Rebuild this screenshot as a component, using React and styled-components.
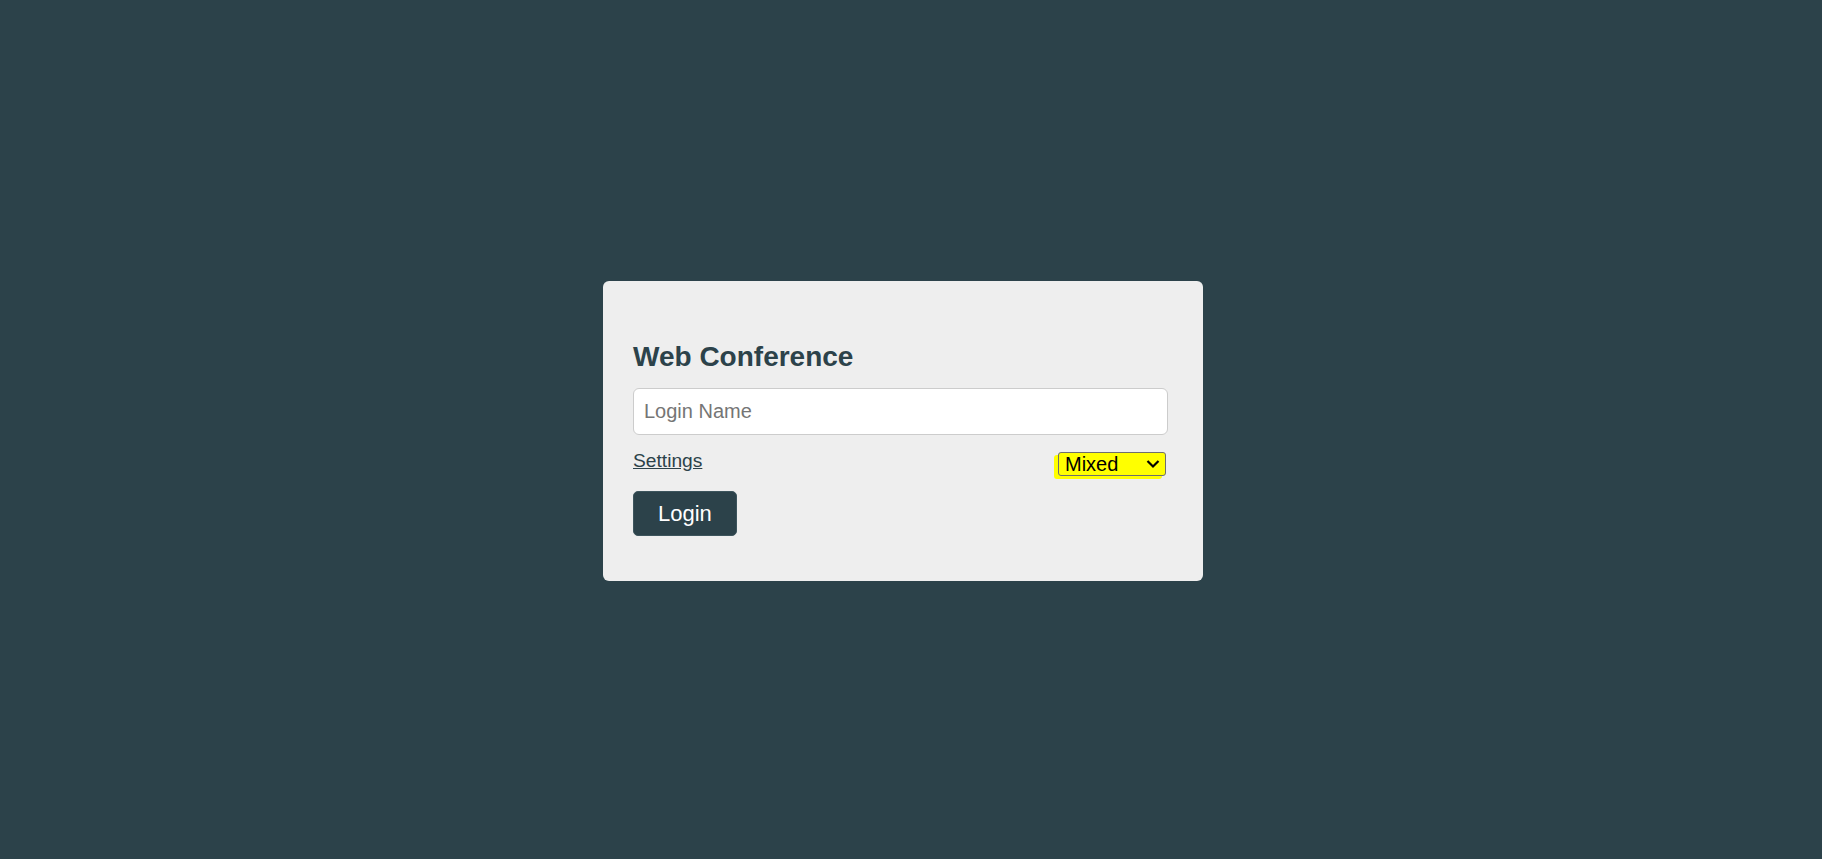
import React from 'react';
import styled, { createGlobalStyle } from 'styled-components';

const GlobalStyle = createGlobalStyle`
    * { box-sizing: border-box; }
    html, body {
        margin: 0;
        padding: 0;
        background-color: #2c424a;
        font-family: "Liberation Sans", Arial, sans-serif;
    }
`;

const Page = styled.div`
    min-height: 100vh;
    display: flex;
    align-items: center;
    justify-content: center;
    padding-right: 16px;
    padding-top: 3px;
`;

const Card = styled.div`
    width: 600px;
    background-color: #eeeeee;
    border-radius: 6px;
    padding: 30px 35px 45px 30px;
    display: flex;
    flex-direction: column;
`;

const Title = styled.h2`
    margin: 30px 0 15px;
    font-size: 28px;
    font-weight: bold;
    line-height: 32px;
    color: #2c424a;
`;

const Input = styled.input`
    width: 100%;
    height: 47px;
    padding: 0 10px;
    font-family: inherit;
    font-size: 20px;
    color: #222;
    background: #fff;
    border: 1px solid #cccccc;
    border-radius: 6px;
    outline: none;
    caret-color: #000;
    &::placeholder {
        color: #757575;
    }
`;

const Row = styled.div`
    margin-top: 15px;
    display: flex;
    justify-content: space-between;
    align-items: flex-start;
`;

const SettingsLink = styled.a`
    font-size: 19.2px;
    line-height: 22px;
    color: #2c424a;
    text-decoration: underline;
    cursor: pointer;
`;

const SelectWrap = styled.div`
    position: relative;
    margin-top: 2px;
    margin-right: 2px;
`;

const Select = styled.select`
    appearance: none;
    width: 108px;
    height: 24px;
    padding: 0 0 0 6px;
    font-family: inherit;
    font-size: 20px;
    line-height: 22px;
    color: #000;
    background-color: #ffff00;
    border: 1px solid #6e6e6e;
    border-radius: 3px;
    box-shadow: -4px 3px 0 0 #ffff00;
    outline: none;
`;

const Chevron = styled.svg`
    position: absolute;
    right: 6px;
    top: 7px;
    pointer-events: none;
`;

const LoginButton = styled.button`
    margin-top: 15px;
    align-self: flex-start;
    height: 45px;
    padding: 0 24px;
    font-family: inherit;
    font-size: 22px;
    color: #ffffff;
    background-color: #2c424a;
    border: 1px solid #3d555d;
    border-radius: 5px;
    cursor: pointer;
`;

const App = () => {
    return (
        <Page>
            <GlobalStyle />
            <Card>
                <Title>Web Conference</Title>
                <Input placeholder="Login Name" autoFocus />
                <Row>
                    <SettingsLink>Settings</SettingsLink>
                    <SelectWrap>
                        <Select defaultValue="mixed">
                            <option value="mixed">Mixed</option>
                            <option value="audio">Audio</option>
                            <option value="video">Video</option>
                        </Select>
                        <Chevron width="14" height="10" viewBox="0 0 14 10">
                            <path d="M1.5 2 L7 7.5 L12.5 2" fill="none" stroke="#000" strokeWidth="2.2" />
                        </Chevron>
                    </SelectWrap>
                </Row>
                <LoginButton>Login</LoginButton>
            </Card>
        </Page>
    );
};

export default App;
